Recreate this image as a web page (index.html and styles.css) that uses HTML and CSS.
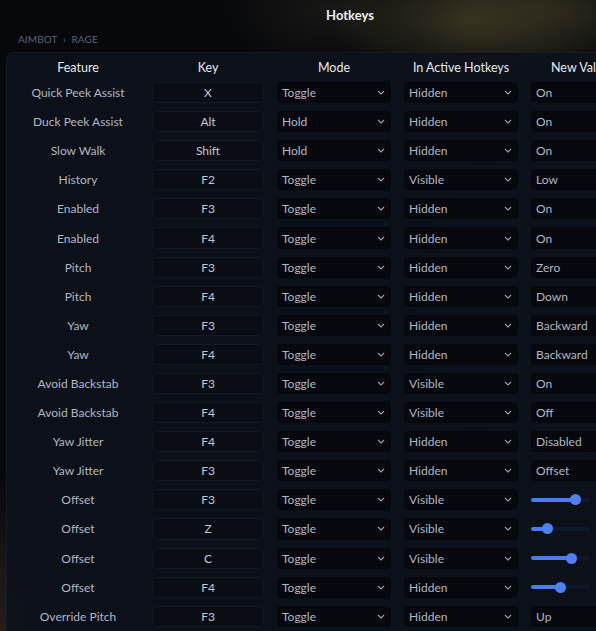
FILE: index.html
```html
<!DOCTYPE html>
<html>
<head>
<meta charset="utf-8">
<link rel="stylesheet" href="styles.css">
</head>
<body>
<div class="page">
  <div class="titlebar"><span class="title">Hotkeys</span></div>
  <div class="crumb">AIMBOT <span class="sep">›</span> RAGE</div>
  <div class="panel">
    <div class="grid" id="grid">
      <div class="hcell">Feature</div>
      <div class="hcell">Key</div>
      <div class="hcell">Mode</div>
      <div class="hcell">In Active Hotkeys</div>
      <div class="hcell hleft">New Value</div>
    </div>
  </div>
</div>
<script src="app.js"></script>
</body>
</html>
```

FILE: app.js
```js
var rows = [
  ["Quick Peek Assist","X","Toggle","Hidden","On"],
  ["Duck Peek Assist","Alt","Hold","Hidden","On"],
  ["Slow Walk","Shift","Hold","Hidden","On"],
  ["History","F2","Toggle","Visible","Low"],
  ["Enabled","F3","Toggle","Hidden","On"],
  ["Enabled","F4","Toggle","Hidden","On"],
  ["Pitch","F3","Toggle","Hidden","Zero"],
  ["Pitch","F4","Toggle","Hidden","Down"],
  ["Yaw","F3","Toggle","Hidden","Backward"],
  ["Yaw","F4","Toggle","Hidden","Backward"],
  ["Avoid Backstab","F3","Toggle","Visible","On"],
  ["Avoid Backstab","F4","Toggle","Visible","Off"],
  ["Yaw Jitter","F4","Toggle","Hidden","Disabled"],
  ["Yaw Jitter","F3","Toggle","Hidden","Offset"],
  ["Offset","F3","Toggle","Visible",0.76],
  ["Offset","Z","Toggle","Visible",0.29],
  ["Offset","C","Toggle","Visible",0.69],
  ["Offset","F4","Toggle","Hidden",0.5],
  ["Override Pitch","F3","Toggle","Hidden","Up"]
];
var chev = '<svg class="chev" width="8" height="5" viewBox="0 0 8 5"><path d="M1 1 L4 4 L7 1" fill="none" stroke="#9aa3b0" stroke-width="1.1"/></svg>';
var g = document.getElementById('grid');
var html = '';
rows.forEach(function (r) {
  html += '<div class="feat">' + r[0] + '</div>';
  html += '<div class="key">' + r[1] + '</div>';
  html += '<div class="sel"><span>' + r[2] + '</span>' + chev + '</div>';
  html += '<div class="sel"><span>' + r[3] + '</span>' + chev + '</div>';
  if (typeof r[4] === 'number') {
    html += '<div class="slider"><div class="track"><div class="fill" style="width:' + (r[4] * 100) + '%"><span class="thumb"></span></div></div></div>';
  } else {
    html += '<div class="val">' + r[4] + '</div>';
  }
});
g.insertAdjacentHTML('beforeend', html);
```

FILE: styles.css
```css
html, body {
  margin: 0;
  padding: 0;
  width: 596px;
  height: 631px;
  overflow: hidden;
}
body {
  background:
    radial-gradient(ellipse 140px 70px at 470px 20px, rgba(92, 84, 48, 0.5), rgba(0,0,0,0) 100%),
    radial-gradient(ellipse 160px 60px at 560px 10px, rgba(70, 64, 40, 0.45), rgba(0,0,0,0) 100%),
    radial-gradient(ellipse 110px 60px at 330px 10px, rgba(48, 46, 36, 0.4), rgba(0,0,0,0) 100%),
    radial-gradient(ellipse 90px 160px at 0px 631px, rgba(70, 54, 36, 0.5), rgba(0,0,0,0) 100%),
    radial-gradient(ellipse 220px 260px at 560px 300px, rgba(40, 38, 40, 0.45), rgba(0,0,0,0) 100%),
    #07080b;
  font-family: Lato, "Noto Sans", sans-serif;
  color: #b9c0ca;
}
.page {
  display: flex;
  flex-direction: column;
}
.titlebar {
  height: 30px;
  display: flex;
  align-items: center;
  justify-content: center;
  padding-left: 104px;
}
.title {
  font-size: 13px;
  font-weight: 700;
  color: #eceef1;
}
.crumb {
  margin: 2px 0 0 18px;
  font-size: 10px;
  letter-spacing: 0.1px;
  color: #5b6474;
  height: 14px;
  line-height: 14px;
}
.crumb .sep {
  margin: 0 3px;
}
.panel {
  margin: 6px 0 0 6px;
  width: 720px;
  height: 600px;
  background: rgba(13, 17, 26, 0.92);
  border: 1px solid rgba(255, 255, 255, 0.035);
  border-radius: 7px;
  padding: 7px 0 0 10px;
  box-sizing: border-box;
}
.grid {
  display: grid;
  grid-template-columns: 122px 112px 114px 114px 114px;
  grid-template-rows: 14px;
  grid-auto-rows: 21.1px;
  column-gap: 13px;
  row-gap: 8px;
  font-size: 12px;
}
.hcell {
  display: flex;
  align-items: center;
  justify-content: center;
  color: #e8eaee;
  font-size: 12.5px;
  white-space: nowrap;
}
.hleft {
  justify-content: flex-start;
  padding-left: 20px;
}
.feat {
  display: flex;
  align-items: center;
  justify-content: center;
  white-space: nowrap;
  color: #b0b7c2;
}
.key {
  display: flex;
  align-items: center;
  justify-content: center;
  background: #0a0d14;
  border: 1px solid #141821;
  border-radius: 4px;
  color: #c3c8d0;
}
.sel, .val {
  display: flex;
  align-items: center;
  justify-content: space-between;
  background: #06080d;
  border-radius: 4px;
  padding: 0 6px 0 5px;
  color: #b0b7c2;
}
.val {
  justify-content: flex-start;
}
.chev {
  display: block;
}
.slider {
  display: flex;
  align-items: center;
}
.track {
  width: 59px;
  height: 4px;
  border-radius: 2px;
  background: #0f172a;
}
.fill {
  position: relative;
  height: 4px;
  border-radius: 2px;
  background: #4a7bef;
}
.thumb {
  position: absolute;
  right: -5px;
  top: -3.5px;
  width: 11px;
  height: 11px;
  border-radius: 50%;
  background: #4f80f6;
}
```
